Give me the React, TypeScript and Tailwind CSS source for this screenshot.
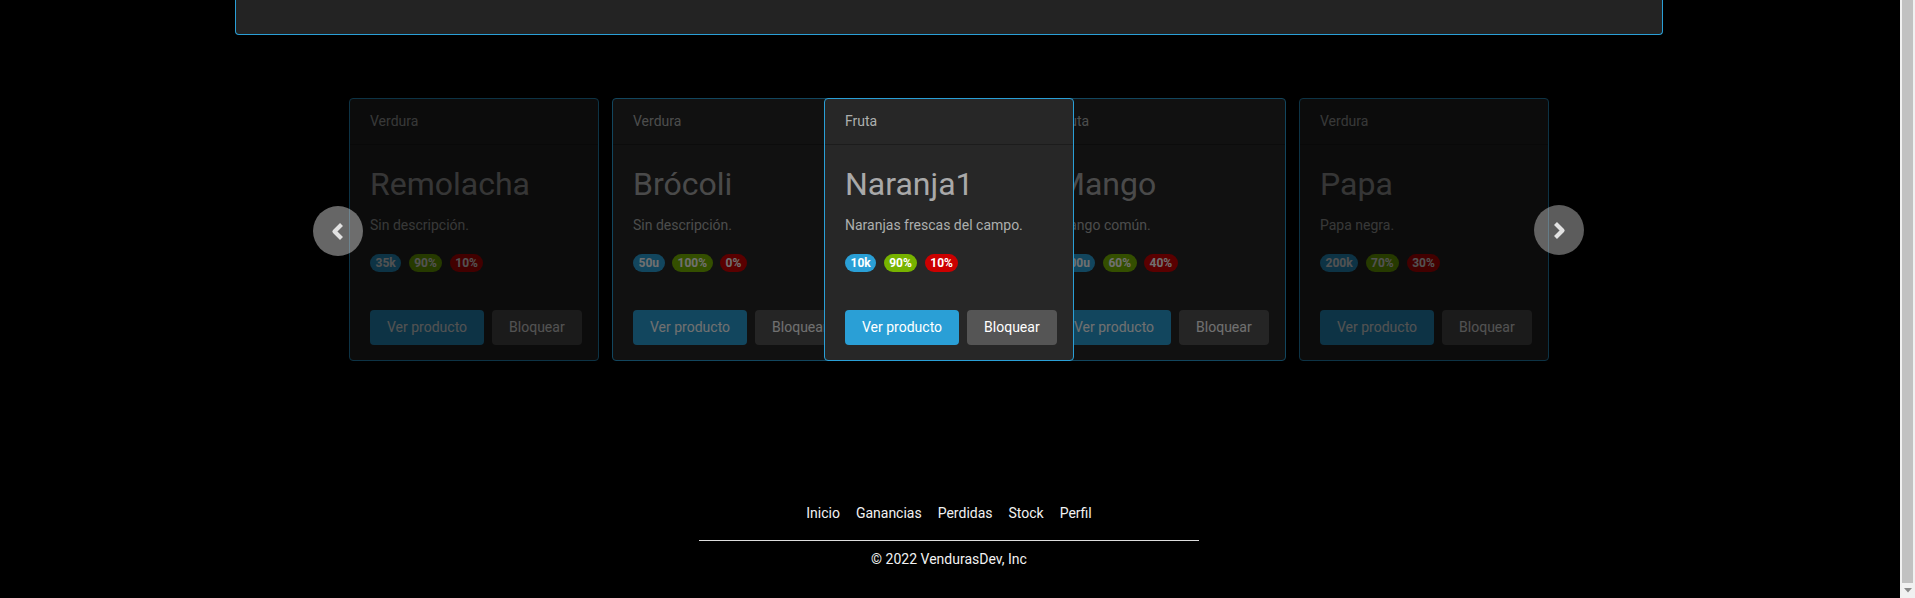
import React from "react";

type Badge = { t: string; c: string };
type CardData = {
  cat: string;
  title: string;
  desc: string;
  badges: Badge[];
};

const BLUE = "bg-[#2a9fd6]";
const GREEN = "bg-[#77b300]";
const RED = "bg-[#cc0000]";

const cards: CardData[] = [
  {
    cat: "Verdura",
    title: "Remolacha",
    desc: "Sin descripción.",
    badges: [
      { t: "35k", c: BLUE },
      { t: "90%", c: GREEN },
      { t: "10%", c: RED },
    ],
  },
  {
    cat: "Verdura",
    title: "Brócoli",
    desc: "Sin descripción.",
    badges: [
      { t: "50u", c: BLUE },
      { t: "100%", c: GREEN },
      { t: "0%", c: RED },
    ],
  },
  {
    cat: "Fruta",
    title: "Naranja1",
    desc: "Naranjas frescas del campo.",
    badges: [
      { t: "10k", c: BLUE },
      { t: "90%", c: GREEN },
      { t: "10%", c: RED },
    ],
  },
  {
    cat: "Fruta",
    title: "Mango",
    desc: "Mango común.",
    badges: [
      { t: "100u", c: BLUE },
      { t: "60%", c: GREEN },
      { t: "40%", c: RED },
    ],
  },
  {
    cat: "Verdura",
    title: "Papa",
    desc: "Papa negra.",
    badges: [
      { t: "200k", c: BLUE },
      { t: "70%", c: GREEN },
      { t: "30%", c: RED },
    ],
  },
];

function Card({ d, extra }: { d: CardData; extra: string }) {
  return (
    <div
      className={
        "w-[250px] h-[263px] flex-none flex flex-col rounded-[4px] border border-[#2a9fd6] bg-[#272727] " +
        extra
      }
    >
      <div className="px-5 py-3 border-b border-[#1c1c1c] text-[14px] leading-[21px] text-[#adafae]">
        {d.cat}
      </div>
      <div className="flex-1 flex flex-col px-5 pt-5 pb-[15px]">
        <div className="text-[32px] leading-[38.4px] text-[#a9a9a9] mb-3 whitespace-nowrap">
          {d.title}
        </div>
        <div className="text-[14px] leading-[21px] text-[#adafae] mb-[18px] whitespace-nowrap">
          {d.desc}
        </div>
        <div className="flex gap-[7.5px]">
          {d.badges.map((b, i) => (
            <span
              key={i}
              className={
                "h-[18px] px-[5.5px] rounded-full text-[12px] leading-none font-bold text-white flex items-center " +
                b.c
              }
            >
              {b.t}
            </span>
          ))}
        </div>
        <div className="mt-auto flex gap-2">
          <button className="h-[35px] px-[17px] rounded-[4px] bg-[#2a9fd6] text-[14px] text-white whitespace-nowrap">
            Ver producto
          </button>
          <button className="h-[35px] px-[17px] rounded-[4px] bg-[#555555] text-[14px] text-white whitespace-nowrap">
            Bloquear
          </button>
        </div>
      </div>
    </div>
  );
}

function Chevron({ dir }: { dir: "left" | "right" }) {
  const pts = dir === "left" ? "10.5,2.5 3.5,9.5 10.5,16.5" : "2.5,2.5 9.5,9.5 2.5,16.5";
  return (
    <svg width="13" height="19" viewBox="0 0 13 19" className="block">
      <polyline
        points={pts}
        fill="none"
        stroke="#e2e2e2"
        strokeWidth="4.2"
        strokeLinecap="butt"
        strokeLinejoin="round"
      />
    </svg>
  );
}

export default function App() {
  return (
    <div className="h-[598px] w-full flex bg-black overflow-hidden font-[Roboto,sans-serif]">
      <div className="flex-1 flex flex-col items-center pr-[2px]">
        {/* top panel (scrolled) */}
        <div className="w-[1428px] h-[35px] flex-none bg-[#232323] border-x border-b border-[#2a9fd6] rounded-b-[4px]" />

        {/* carousel */}
        <div className="relative mt-[63px] w-[1200px] flex gap-[13px]">
          <Card d={cards[0]} extra="opacity-[0.32]" />
          <Card d={cards[1]} extra="opacity-[0.44]" />
          <Card d={cards[2]} extra="relative z-10 -mx-[51px]" />
          <Card d={cards[3]} extra="opacity-[0.44]" />
          <Card d={cards[4]} extra="opacity-[0.32]" />

          <div className="absolute left-[-36px] top-[108px] z-20 w-[50px] h-[50px] rounded-full bg-[rgba(255,255,255,0.4)] flex items-center justify-center pr-[1px]">
            <Chevron dir="left" />
          </div>
          <div className="absolute right-[-35px] top-[107px] z-20 w-[50px] h-[50px] rounded-full bg-[rgba(255,255,255,0.36)] flex items-center justify-center pl-[1px]">
            <Chevron dir="right" />
          </div>
        </div>

        {/* footer */}
        <div className="mt-[142px] flex gap-4 text-[14px] leading-[21px] text-[#f2f2f2]">
          <span>Inicio</span>
          <span>Ganancias</span>
          <span>Perdidas</span>
          <span>Stock</span>
          <span>Perfil</span>
        </div>
        <div className="mt-[16px] w-[500px] h-px bg-[#dedede]" />
        <div className="mt-2 text-[14px] leading-[21px] text-[#f2f2f2]">© 2022 VendurasDev, Inc</div>
      </div>

      {/* scrollbar */}
      <div className="w-[15px] flex-none flex flex-col bg-[#f1f1f1]">
        <div className="mx-[2px] h-[583px] bg-[#c1c1c1]" />
        <div className="flex-1 flex items-center justify-center">
          <svg width="8" height="5" viewBox="0 0 8 5" className="block">
            <polygon points="0,0 8,0 4,4.5" fill="#8a8a8a" />
          </svg>
        </div>
      </div>
    </div>
  );
}
